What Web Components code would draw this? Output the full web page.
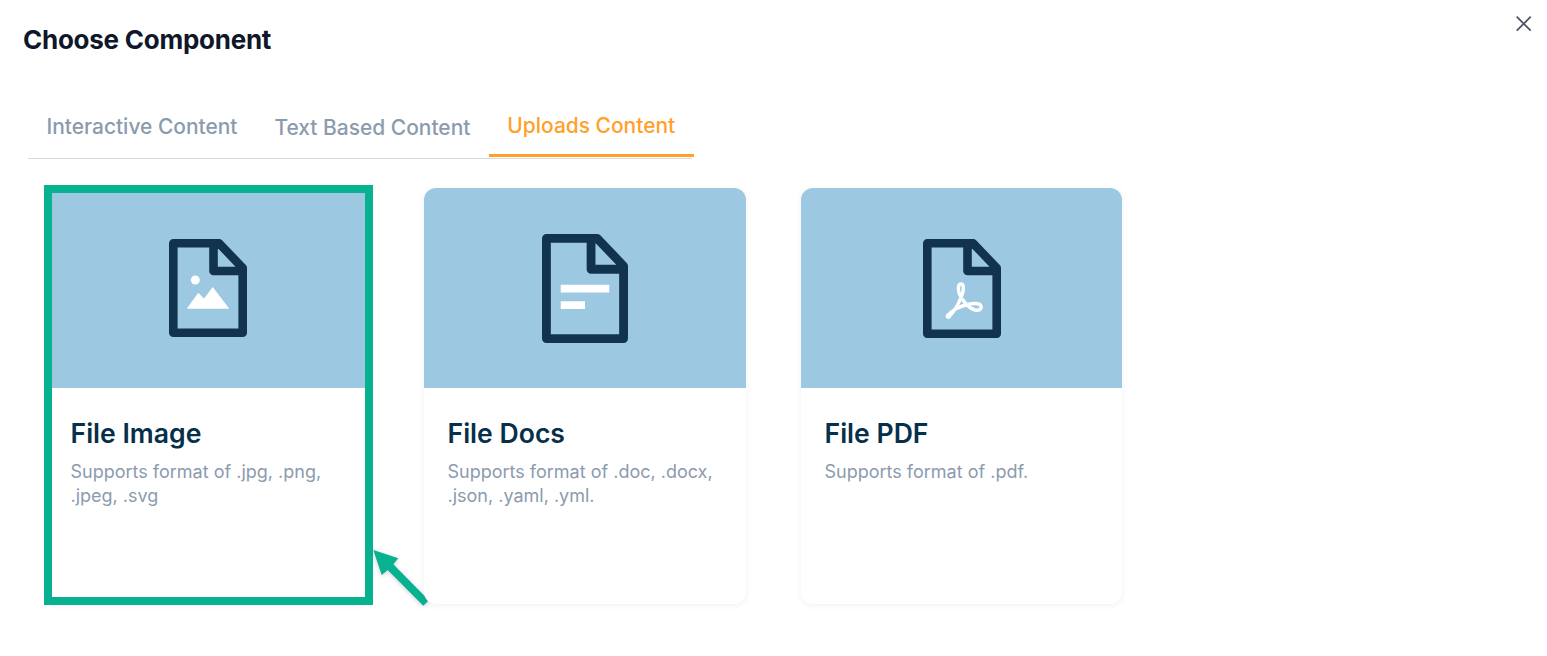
<!DOCTYPE html>
<html>
<head>
<meta charset="utf-8">
<title>Choose Component</title>
<style>
  body { margin: 0; background: #fff; font-family: "Inter", "Liberation Sans", sans-serif; }
</style>
</head>
<body>
<choose-dialog heading="Choose Component">
  <tab-bar>
    <tab-item shift="1">Interactive Content</tab-item>
    <tab-item shift="2">Text Based Content</tab-item>
    <tab-item active>Uploads Content</tab-item>
  </tab-bar>
  <card-list>
    <component-card heading="File Image" highlighted>
      <svg slot="icon" width="78" height="98" viewBox="0 0 78 98">
        <path d="M4.300 4.300H50L73.700 29V93.700H4.300Z M44.500 4.300V32H73.700" fill="none" stroke="#12334d" stroke-width="8.600" stroke-linejoin="round"/>
        <circle cx="26.300" cy="41" r="4.500" fill="#fff"/>
        <path d="M17.700 69.700L29.300 53.700L35 59.500L43.700 48L60.300 69.700Z" fill="#fff"/>
      </svg>
      Supports format of .jpg, .png, .jpeg, .svg
    </component-card>
    <component-card heading="File Docs">
      <svg slot="icon" width="86" height="109" viewBox="0 0 78 98.900">
        <path d="M4 4H50L74 29V94.900H4Z M44.500 4V32H74" fill="none" stroke="#12334d" stroke-width="8" stroke-linejoin="round"/>
        <path d="M17 46H61V53H17Z M17 61H39V68H17Z" fill="#fff"/>
      </svg>
      Supports format of .doc, .docx, .json, .yaml, .yml.
    </component-card>
    <component-card heading="File PDF">
      <svg slot="icon" width="78" height="99" viewBox="0 0 78 99">
        <path d="M4.300 4.300H50L73.700 29V94.700H4.300Z M44.500 4.300V32H73.700" fill="none" stroke="#12334d" stroke-width="8.600" stroke-linejoin="round"/>
        <path d="M25 78C31 74 36 64 39 56C41 50 41 45 38 45C35 45 35 50 36 54C38 60 45 69 52 71C56 72 59 70 58 67C57 64 50 64 45 65.500C38 67 27 71 25 78Z" fill="none" stroke="#fff" stroke-width="3.400" stroke-linejoin="round"/>
        <circle cx="25.500" cy="77" r="2.800" fill="#fff"/>
      </svg>
      Supports format of .pdf.
    </component-card>
  </card-list>
</choose-dialog>

<script>
class ChooseDialog extends HTMLElement {
  constructor() {
    super();
    this.shadowDOM = this.attachShadow({ mode: "open" });
  }

  connectedCallback() {
    this.shadowDOM.innerHTML = `
      <style>
        :host {
          display: block;
          height: 656px;
          box-sizing: border-box;
          padding: 24px 14px 0 23px;
        }
        header {
          display: flex;
          justify-content: space-between;
          align-items: flex-start;
        }
        h1 {
          margin: 0;
          font-size: 26px;
          line-height: 32px;
          font-weight: 700;
          letter-spacing: -0.25px;
          color: #0f172a;
        }
        button {
          border: none;
          background: none;
          padding: 0;
          margin-top: -9px;
          width: 18px;
          height: 18px;
          display: block;
          color: #4b5563;
        }
      </style>
      <header>
        <h1>${this.getAttribute("heading")}</h1>
        <button aria-label="Close">
          <svg width="18" height="18" viewBox="0 0 18 18">
            <path d="M1.700 1.700L15.700 15.700M15.700 1.700L1.700 15.700" fill="none" stroke="currentColor" stroke-width="1.800"/>
          </svg>
        </button>
      </header>
      <slot></slot>
    `;
  }
}

class TabBar extends HTMLElement {
  constructor() {
    super();
    this.shadowDOM = this.attachShadow({ mode: "open" });
    this.shadowDOM.innerHTML = `
      <style>
        :host {
          display: flex;
          width: 664px;
          height: 55px;
          margin: 48px 0 0 5px;
          box-sizing: border-box;
          border-bottom: 1px solid #d8dae2;
        }
      </style>
      <slot></slot>
    `;
  }
}

class TabItem extends HTMLElement {
  constructor() {
    super();
    this.shadowDOM = this.attachShadow({ mode: "open" });
    this.shadowDOM.innerHTML = `
      <style>
        :host {
          display: block;
          flex: none;
          white-space: nowrap;
          box-sizing: border-box;
          height: 53px;
          padding: 8px 18.500px 0;
          font-size: 20.950px;
          line-height: 28px;
          font-weight: 500;
          color: #8b9bae;
        }
        :host([shift="1"]) { padding-top: 9px; }
        :host([shift="2"]) { padding-top: 10px; }
        :host([active]) {
          color: #ffa02b;
          border-bottom: 3px solid #ffa02b;
        }
      </style>
      <slot></slot>
    `;
  }
}

class CardList extends HTMLElement {
  constructor() {
    super();
    this.shadowDOM = this.attachShadow({ mode: "open" });
    this.shadowDOM.innerHTML = `
      <style>
        :host {
          display: grid;
          grid-template-columns: 322px 322px 321px;
          gap: 55px;
          margin: 29px 0 0 24px;
        }
      </style>
      <slot></slot>
    `;
  }
}

class ComponentCard extends HTMLElement {
  constructor() {
    super();
    this.shadowDOM = this.attachShadow({ mode: "open" });
  }

  connectedCallback() {
    const mark = this.hasAttribute("highlighted")
      ? `<div class="mark"></div>
         <svg class="arrow" width="60" height="60" viewBox="0 0 60 60">
           <path d="M1.300 1L26.300 9.300L21.300 15.300L56.800 51.200L51.300 56.700L15.700 21L9.700 26Z" fill="#08b190"/>
         </svg>`
      : "";
    this.shadowDOM.innerHTML = `
      <style>
        :host {
          display: flex;
          flex-direction: column;
          position: relative;
          height: 416px;
          background: #fff;
          border-radius: 12px;
          box-shadow: 0 1px 6px rgba(60, 70, 90, 0.08);
        }
        .top {
          display: flex;
          align-items: center;
          justify-content: center;
          height: 200px;
          background: #9cc8e2;
          border-radius: 12px 12px 0 0;
        }
        ::slotted(svg) { filter: blur(0.35px); }
        .body { padding: 27px 24px 0 23.5px; }
        h2 {
          margin: 0 0 8.500px;
          font-size: 26.6px;
          line-height: 36px;
          font-weight: 600;
          color: #06304a;
        }
        p {
          margin: 0;
          font-size: 18px;
          line-height: 24px;
          color: #8b9bae;
        }
        .mark {
          position: absolute;
          inset: -3px -4px -1px -3px;
          border: 8px solid #08b190;
        }
        .arrow {
          position: absolute;
          left: 325px;
          top: 361px;
          filter: drop-shadow(0 1px 2px rgba(0, 0, 0, 0.2));
        }
      </style>
      <div class="top"><slot name="icon"></slot></div>
      <div class="body">
        <h2>${this.getAttribute("heading")}</h2>
        <p><slot></slot></p>
      </div>
      ${mark}
    `;
  }
}

customElements.define("choose-dialog", ChooseDialog);
customElements.define("tab-bar", TabBar);
customElements.define("tab-item", TabItem);
customElements.define("card-list", CardList);
customElements.define("component-card", ComponentCard);
</script>
</body>
</html>
